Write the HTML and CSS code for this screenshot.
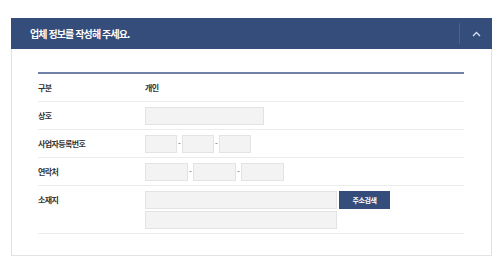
FILE: index.html
```html
<!DOCTYPE html>
<html lang="ko">
<head>
<meta charset="utf-8">
<link rel="stylesheet" href="styles.css">
</head>
<body>
<div class="page">
  <section class="card">
    <header class="card-head">
      <h2 class="card-title">업체 정보를 작성해 주세요.</h2>
      <button class="toggle" type="button" aria-label="접기">
        <svg width="9" height="6" viewBox="0 0 9 6"><path d="M1 5 L4.5 1.5 L8 5" fill="none" stroke="#cfe0f5" stroke-width="1.4"/></svg>
      </button>
    </header>
    <div class="card-body">
      <table class="form-table">
        <tr>
          <th>구분</th>
          <td class="value">개인</td>
        </tr>
        <tr>
          <th>상호</th>
          <td><input class="field w-name" type="text"></td>
        </tr>
        <tr>
          <th>사업자등록번호</th>
          <td><div class="group"><input class="field w-biz" type="text"><span class="dash">-</span><input class="field w-biz" type="text"><span class="dash">-</span><input class="field w-biz" type="text"></div></td>
        </tr>
        <tr>
          <th>연락처</th>
          <td><div class="group"><input class="field w-tel" type="text"><span class="dash">-</span><input class="field w-tel" type="text"><span class="dash">-</span><input class="field w-tel" type="text"></div></td>
        </tr>
        <tr>
          <th>소재지</th>
          <td>
            <div class="addr">
              <div class="group tight"><input class="field w-addr" type="text"><button class="btn" type="button">주소검색</button></div>
              <input class="field w-addr" type="text">
            </div>
          </td>
        </tr>
      </table>
    </div>
  </section>
</div>
</body>
</html>
```

FILE: styles.css
```css
* { box-sizing: border-box; }
body {
  margin: 0;
  background: #fff;
  font-family: "Noto Sans CJK KR", "Noto Sans", sans-serif;
  color: #333;
}
.page {
  padding: 18px 8px 14px 11px;
}
.card {
  border: 1px solid #e2e2e2;
  background: #fff;
}
.card-head {
  margin: -1px -1px 0 -1px;
  height: 31px;
  background: #354d7a;
  display: flex;
  align-items: center;
  justify-content: space-between;
  padding-left: 19px;
}
.card-title {
  margin: 0;
  font-size: 10px;
  font-weight: 700;
  letter-spacing: -0.9px;
  color: #fff;
}
.toggle {
  width: 33px;
  height: 21px;
  padding: 0;
  border: 0;
  border-left: 1px solid rgba(255,255,255,0.12);
  background: transparent;
  display: flex;
  align-items: center;
  justify-content: center;
}
.card-body {
  padding: 23px 27px 21px 26px;
}
.form-table {
  width: 100%;
  border-collapse: collapse;
  border-top: 2px solid #6f81a7;
}
.form-table tr {
  border-bottom: 1px solid #ececec;
}
.form-table th {
  width: 107px;
  text-align: left;
  vertical-align: top;
  padding: 5px 0 4px;
  font-size: 8px;
  line-height: 18px;
  font-weight: 700;
  letter-spacing: -0.6px;
  color: #333;
}
.form-table td {
  padding: 5px 0 4px;
  font-size: 8px;
  line-height: 17px;
  vertical-align: top;
}
.form-table td.value {
  font-weight: 700;
  letter-spacing: -0.6px;
  color: #333;
}
.field {
  display: block;
  height: 18px;
  margin: 0;
  padding: 0 4px;
  border: 1px solid #e3e3e3;
  background: #f3f3f3;
  font: inherit;
}
.w-name { width: 119px; }
.w-biz { width: 32px; }
.w-tel { width: 43px; }
.w-addr { width: 192px; }
.group {
  display: flex;
  align-items: center;
}
.dash {
  width: 5px;
  text-align: center;
  font-size: 8px;
  line-height: 18px;
  color: #555;
}
.tight { gap: 2px; }
.addr {
  display: flex;
  flex-direction: column;
  gap: 2px;
}
.btn {
  width: 51px;
  height: 18px;
  padding: 0;
  border: 0;
  background: #354d7a;
  color: #fff;
  font-family: "Noto Sans CJK KR", sans-serif;
  font-size: 7px;
  font-weight: 700;
  letter-spacing: -0.5px;
}
```
